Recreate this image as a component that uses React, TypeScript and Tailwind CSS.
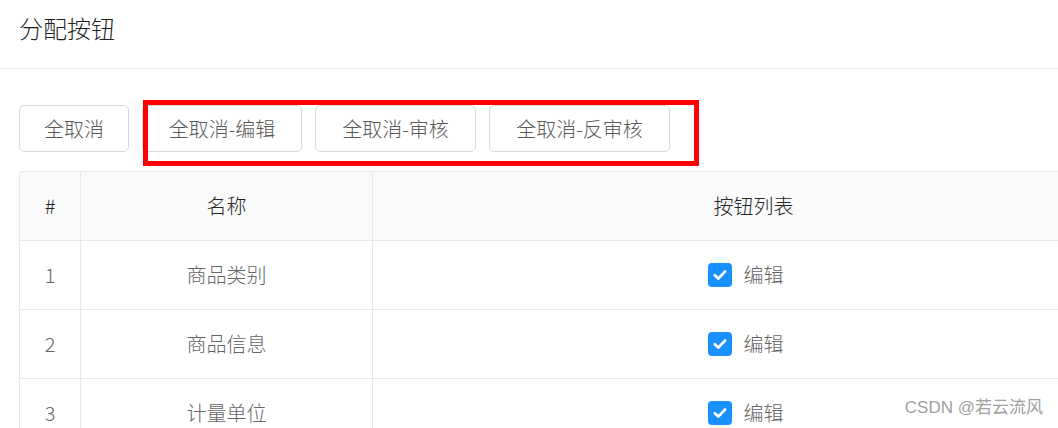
import React from "react";

const buttons = [
  { label: "全取消", w: "w-[110px]" },
  { label: "全取消-编辑", w: "w-[160px]" },
  { label: "全取消-审核", w: "w-[161px]" },
  { label: "全取消-反审核", w: "w-[181px]" },
];

const rows = [
  { id: 1, name: "商品类别" },
  { id: 2, name: "商品信息" },
  { id: 3, name: "计量单位" },
];

const CheckBox = () => (
  <span className="inline-flex items-center justify-center w-[24px] h-[24px] rounded-[4px] bg-[#1890ff]">
    <svg width="18" height="18" viewBox="0 0 18 18" fill="none">
      <path d="M3.8 9.2 L7.3 12.6 L14 5.6" stroke="#fff" strokeWidth="2.8" strokeLinecap="round" strokeLinejoin="round" />
    </svg>
  </span>
);

const App = () => {
  return (
    <div
      className="relative w-[1058px] h-[428px] overflow-hidden bg-white font-light"
      style={{ fontFamily: '"Noto Sans CJK SC", "Noto Sans", sans-serif' }}
    >
      <div className="h-[69px] border-b border-[#e8e8e8] pl-[19px] pt-[13px]">
        <h1 className="text-[24px] leading-[30px] text-[#1f1f1f]">分配按钮</h1>
      </div>

      <div className="pl-[19px] pt-[36px]">
        <div className="flex gap-[13px]">
          {buttons.map((b) => (
            <button
              key={b.label}
              className={`${b.w} h-[47px] border border-[#d9d9d9] rounded-[5px] bg-white text-[20px] text-[#595959] leading-none`}
            >
              {b.label}
            </button>
          ))}
        </div>

        <table className="mt-[19px] table-fixed border-separate border-spacing-0 w-[1115px] text-[20px]">
          <colgroup>
            <col className="w-[61px]" />
            <col className="w-[292px]" />
            <col className="w-[762px]" />
          </colgroup>
          <thead>
            <tr className="bg-[#fafafa] text-[#262626]">
              <th className="h-[70px] font-light border-t border-l border-b border-[#e8e8e8] rounded-tl-[4px]">#</th>
              <th className="h-[70px] font-light border-t border-l border-b border-[#e8e8e8]">名称</th>
              <th className="h-[70px] font-light border-t border-l border-b border-[#e8e8e8]">按钮列表</th>
            </tr>
          </thead>
          <tbody className="text-[#666]">
            {rows.map((r) => (
              <tr key={r.id}>
                <td className="h-[69px] text-center border-l border-b border-[#e8e8e8]">{r.id}</td>
                <td className="h-[69px] text-center border-l border-b border-[#e8e8e8]">{r.name}</td>
                <td className="h-[69px] border-l border-b border-[#e8e8e8]">
                  <div className="flex items-center justify-center gap-[12px] pr-[16px]">
                    <CheckBox />
                    <span>编辑</span>
                  </div>
                </td>
              </tr>
            ))}
          </tbody>
        </table>
      </div>

      <div className="absolute left-[143px] top-[100px] w-[556px] h-[66px] border-[5px] border-[#ff0000] pointer-events-none" />

      <div
        className="absolute right-[15px] bottom-[8px] text-[17px] text-[#a0a0a0] font-normal"
        style={{ fontFamily: '"Liberation Sans", "Noto Sans CJK SC", sans-serif' }}
      >
        CSDN @若云流风
      </div>
    </div>
  );
};

export default App;
